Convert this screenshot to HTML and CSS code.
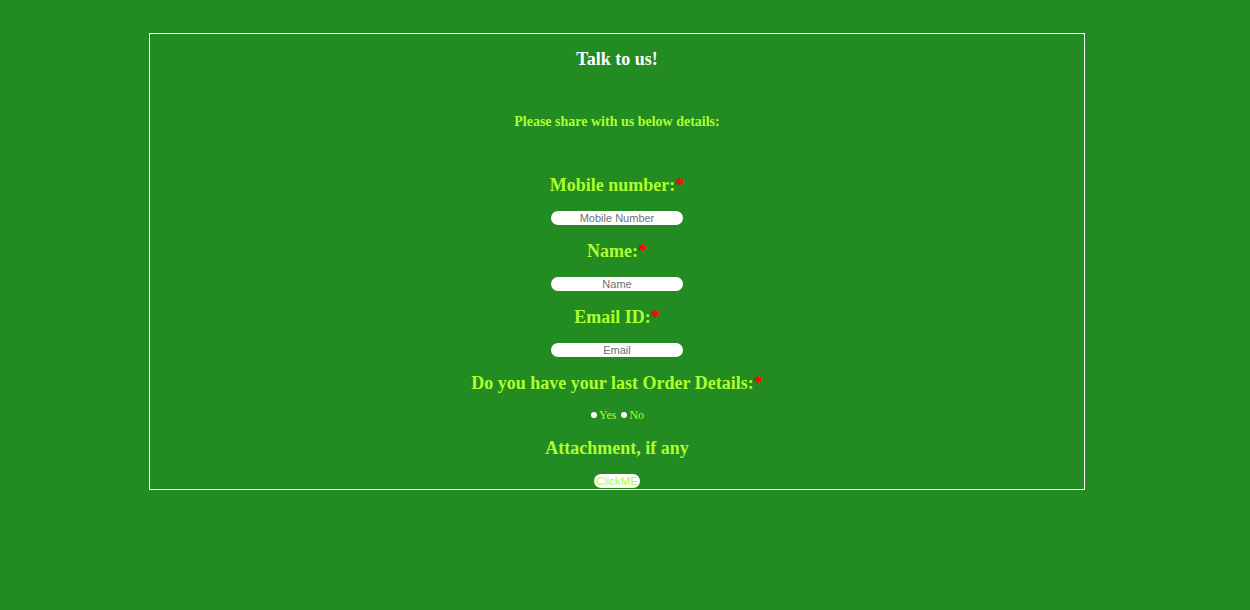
FILE: index.html
```
<!DOCTYPE html>
<html>
<head>
<meta charset="utf-8">
<link rel="stylesheet" href="styles.css">
</head>
<body>
<div class="box">
  <div class="title">Talk to us!</div>
  <div class="sub">Please share with us below details:</div>
  <div class="label first">Mobile number:<span class="req">*</span></div>
  <input class="field" type="text" placeholder="Mobile Number">
  <div class="label">Name:<span class="req">*</span></div>
  <input class="field" type="text" placeholder="Name">
  <div class="label">Email ID:<span class="req">*</span></div>
  <input class="field" type="text" placeholder="Email">
  <div class="label">Do you have your last Order Details:<span class="req">*</span></div>
  <div class="radios">
    <span class="dot"></span><span class="opt">Yes</span>
    <span class="dot"></span><span class="opt">No</span>
  </div>
  <div class="label attach">Attachment, if any</div>
  <button class="btn" type="button">ClickME</button>
</div>
</body>
</html>
```
FILE: styles.css
```
html, body {
  background: #228b22;
}
body {
  margin: 8px;
  font-family: "Liberation Serif", "Times New Roman", serif;
}
.box {
  margin: 25px 0 0 141px;
  width: 934px;
  border: 1px solid #ffffff;
  display: flex;
  flex-direction: column;
  align-items: center;
  padding: 14px 0 1px;
}
.title {
  font-size: 18px;
  font-weight: bold;
  line-height: 22px;
  color: #ffffff;
}
.sub {
  margin-top: 44px;
  font-size: 14px;
  font-weight: bold;
  line-height: 16px;
  color: #adff2f;
}
.label {
  margin-top: 15px;
  font-size: 18px;
  font-weight: bold;
  line-height: 22px;
  color: #adff2f;
}
.label.first {
  margin-top: 44px;
}
.req {
  color: #ff0000;
}
.field {
  margin-top: 15px;
  width: 132px;
  height: 14px;
  box-sizing: border-box;
  border: none;
  border-radius: 7px;
  background: #ffffff;
  padding: 0;
  font-family: "Liberation Sans", Arial, sans-serif;
  font-size: 11px;
  line-height: 14px;
  text-align: center;
  outline: none;
}
.field::placeholder {
  color: #6f6f6f;
}
.radios {
  margin-top: 14px;
  display: flex;
  align-items: center;
  line-height: 14px;
  font-size: 12px;
  color: #adff2f;
}
.dot {
  width: 6px;
  height: 6px;
  border-radius: 50%;
  background: #ffffff;
  margin: 0 2px 0 1px;
}
.opt {
  margin-right: 4px;
}
.opt:last-child {
  margin-right: 0;
}
.label.attach {
  margin-top: 15px;
}
.btn {
  margin-top: 15px;
  height: 14px;
  padding: 0 2px;
  border: none;
  border-radius: 7px;
  background: #ffffff;
  color: #adff2f;
  font-family: "Liberation Sans", Arial, sans-serif;
  font-size: 11.5px;
  line-height: 14px;
}
```
